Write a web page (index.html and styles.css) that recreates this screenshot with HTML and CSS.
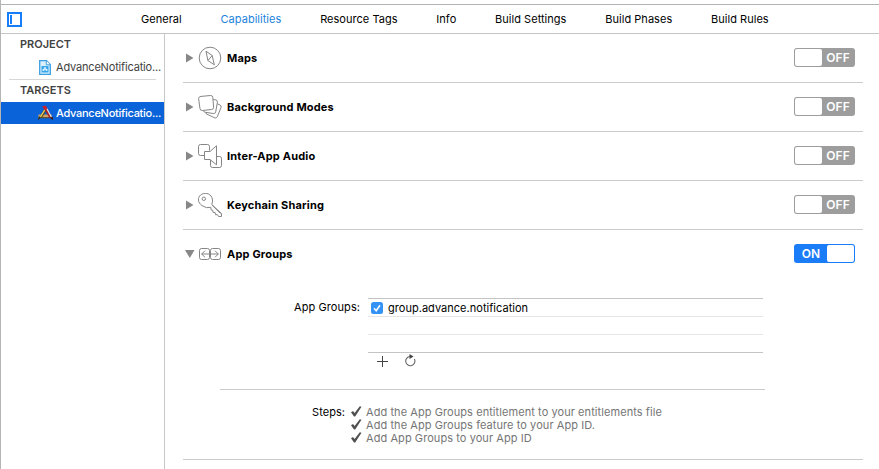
FILE: index.html
```html
<!DOCTYPE html>
<html lang="en">
<head>
<meta charset="utf-8">
<title>Capabilities</title>
<link rel="stylesheet" href="styles.css">
</head>
<body>
<div class="window">
  <nav class="tabs">
    <svg class="pane-toggle" width="15" height="15" viewBox="0 0 15 15"><path d="M1 1h13v13H1z" fill="none" stroke="#177efb" stroke-width="2"/><path d="M3 3h2v9H3z" fill="#177efb"/></svg>
    <div class="tab-list">
      <span class="tab">General</span>
      <span class="tab active">Capabilities</span>
      <span class="tab">Resource Tags</span>
      <span class="tab">Info</span>
      <span class="tab">Build Settings</span>
      <span class="tab">Build Phases</span>
      <span class="tab">Build Rules</span>
    </div>
  </nav>
  <div class="body">
    <aside class="sidebar">
      <h2 class="heading">PROJECT</h2>
      <div class="item project">
        <svg width="12" height="15" viewBox="0 0 12 15"><path d="M.7.7h6.800l3.800 3.800v9.800H.7z" fill="#d9f0fc" stroke="#3d9fe0" stroke-width="1.300"/><path d="M7.300.8v4h4" fill="#fff" stroke="#3d9fe0"/><path d="M2.500 6h7v6.500h-7z" fill="#35a7ed"/><path d="M4 11l2-3.800L8 11M3.500 9.800h5" fill="none" stroke="#fff" stroke-width=".9"/></svg>
        <span class="name">AdvanceNotificatio...</span>
      </div>
      <div class="divider"></div>
      <h2 class="heading">TARGETS</h2>
      <div class="item selected">
        <svg width="17" height="17" viewBox="0 0 17 17"><path d="M1.500 9.500h13v3h-13z" fill="#d0a064"/><path d="M1.500 12.700h13" stroke="#6b4c20"/><path d="M8.800 4 3.500 12.500" stroke="#54461e" stroke-width="2.600"/><path d="M8.600 3.500 3.300 12.200" stroke="#edd05c" stroke-width="1.400"/><path d="M3.800 12.500.5 15.500l1.800-4z" fill="#3a2815"/><path d="m8 3 5.500 9.500" stroke="#a81d28" stroke-width="2.400"/><path d="m9.800 3.500 4.500 8.500" stroke="#f0e6dc" stroke-width="1.200"/><path d="M5 1.500 8.500.5l2 3L8 5z" fill="#c9212e"/><path d="m12.500 12.500 3.500 2.800V12z" fill="#3b2020"/></svg>
        <span class="name">AdvanceNotificatio...</span>
      </div>
    </aside>
    <main class="content">
      <section class="row">
        <svg class="arrow" width="8" height="10"><path d="M0 .5 7.500 5 0 9.500z"/></svg>
        <svg class="icon" width="24" height="24" viewBox="0 0 24 24"><circle cx="12" cy="12" r="10.800"/><path d="m8 5.200 6.200 4.300 2.100 9.300-6.400-4.300zM9.900 14.500l4.300-5"/></svg>
        <span class="title">Maps</span><span class="switch"><i class="knob"></i><b class="state">OFF</b></span>
      </section>
      <section class="row">
        <svg class="arrow" width="8" height="10"><path d="M0 .5 7.500 5 0 9.500z"/></svg>
        <svg class="icon" width="24" height="24" viewBox="0 0 24 24"><path d="M3 1.400 12.600.5q2 0 2.200 1.800l.8 10q0 2-2 2.200l-9.400 1Q2.200 15.500 2 13.700L.6 3.500Q.6 1.700 3 1.400z"/><path d="M15.300 4.500l2.500.4q1.800.4 1.600 2.300l-1.700 9.700q-.5 2-2.400 1.600L7.300 17.300q-1.800-.4-2-1.900"/><path d="m19.300 8.800 2.800 1.200q1.500.7.9 2.500l-3.700 9.300q-.8 1.700-2.500 1.100l-7.800-3.700q-1.300-.6-1.400-1.700"/></svg>
        <span class="title">Background Modes</span><span class="switch"><i class="knob"></i><b class="state">OFF</b></span>
      </section>
      <section class="row">
        <svg class="arrow" width="8" height="10"><path d="M0 .5 7.500 5 0 9.500z"/></svg>
        <svg class="icon" width="24" height="24" viewBox="0 0 24 24"><path d="M6.500 11.500h-4q-2 0-2-2v-7q0-2 2-2h7q2 0 2 2v4M6.500 7.500h5.500l6.500-5.700v19L12 15.500H6.500zM18.500 12.500h3q2 0 2 2v7q0 2-2 2h-7q-2 0-2-2V15.800"/></svg>
        <span class="title">Inter-App Audio</span><span class="switch"><i class="knob"></i><b class="state">OFF</b></span>
      </section>
      <section class="row">
        <svg class="arrow" width="8" height="10"><path d="M0 .5 7.500 5 0 9.500z"/></svg>
        <svg class="icon" width="24" height="24" viewBox="0 0 24 24"><circle cx="5.800" cy="5.800" r="1.700"/><path d="M12.800 14.300Q8.500 15.800 4 12.600C-.5 9.500-.5 4.500 2.600 2 6-.8 12-.2 14 4.700q1.300 3.300-.2 6.800l9.700 9v3h-2.900l-1.200-1.900-1.800.2-.5-2.200-2-.2-.4-2.100-1.700-.5zM14 12.200l8.500 8.300"/></svg>
        <span class="title">Keychain Sharing</span><span class="switch"><i class="knob"></i><b class="state">OFF</b></span>
      </section>
      <section class="row open">
        <svg class="arrow down" width="10" height="8"><path d="M0 0h9.500L4.750 8z"/></svg>
        <svg class="icon" width="24" height="24" viewBox="0 0 24 24"><rect x="1.500" y="6.500" width="10" height="11" rx="2"/><rect x="12.500" y="6.500" width="10" height="11" rx="2"/><path d="M3.500 12h17M7 8.700 3.700 12 7 15.300M17 8.700l3.300 3.300-3.300 3.300"/></svg>
        <span class="title">App Groups</span><span class="switch on"><b class="state">ON</b><i class="knob"></i></span>
      </section>
      <section class="details">
        <div class="groups-form">
          <span class="label">App Groups:</span>
          <div class="table">
            <div class="cell"><svg class="checkbox" width="12" height="12" viewBox="0 0 12 12"><rect width="12" height="12" rx="2.500" fill="#3491f5"/><path d="m3 6.300 2.200 2.400L9 3.200" fill="none" stroke="#fff" stroke-width="1.500"/></svg><span class="group-name">group.advance.notification</span></div>
            <div class="cell"></div>
            <div class="cell last"></div>
            <div class="tools">
              <svg width="11" height="11" viewBox="0 0 11 11"><path d="M5.500 0v11M0 5.500h11" stroke="#444"/></svg>
              <svg class="refresh" width="11" height="13" viewBox="0 0 11 13"><path d="M5 2.500A4.600 4.600 0 1 0 9.400 5" fill="none" stroke="#666" stroke-width="1.100"/><path d="m4.500 0 4 2.400-4 2.500z" fill="#444"/></svg>
            </div>
          </div>
        </div>
        <div class="steps">
          <span class="steps-label">Steps:</span>
          <div class="step-list">
            <div class="step"><svg width="11" height="11" viewBox="0 0 11 11"><path d="M0 6.200 2 5l1.600 2L8.800.2l1.700.6L4.200 10.500H3z" fill="#505050"/></svg><span>Add the App Groups entitlement to your entitlements file</span></div>
            <div class="step"><svg width="11" height="11" viewBox="0 0 11 11"><path d="M0 6.200 2 5l1.600 2L8.800.2l1.700.6L4.200 10.500H3z" fill="#505050"/></svg><span>Add the App Groups feature to your App ID.</span></div>
            <div class="step"><svg width="11" height="11" viewBox="0 0 11 11"><path d="M0 6.200 2 5l1.600 2L8.800.2l1.700.6L4.200 10.500H3z" fill="#505050"/></svg><span>Add App Groups to your App ID</span></div>
          </div>
        </div>
      </section>
    </main>
  </div>
</div>
</body>
</html>
```
FILE: styles.css
```css
* { box-sizing: border-box; }
body { margin: 0; overflow: hidden; background: #fff; color: #000; font: 11px/13px Inter, "Liberation Sans", sans-serif; letter-spacing: .07px; }
svg { display: block; flex: none; }
span { white-space: nowrap; }
.window { height: 469px; padding-top: 4px; border-left: 1px solid #b5b5b5; display: flex; flex-direction: column; }
.tabs { height: 30px; flex: none; display: flex; align-items: center; border-top: 1px solid #b4b4b4; border-bottom: 1px solid #c5c5c5; padding-left: 6px; letter-spacing: .03px; }
.tab-list { display: flex; margin-left: 119px; gap: 38.800px; }
.tab.active { color: #1c83dc; }
.body { flex: 1; display: flex; min-height: 0; }
.sidebar { width: 164px; flex: none; border-right: 1px solid #c8c8c8; color: #424242; }
.heading { font-size: 11px; line-height: 13px; font-weight: 600; margin: 4px 0 0 19px; letter-spacing: 0; }
.item { height: 22px; display: flex; align-items: center; letter-spacing: -.18px; }
.item.project { margin-top: 5px; padding-left: 38px; gap: 5px; }
.item.selected { margin-top: 5px; padding-left: 36px; gap: 2px; color: #fff; background: #0a63d8; font-weight: 500; letter-spacing: -.27px; }
.divider { height: 1px; margin: 1px 8px 0; background: #d7d7d7; }
.content { width: 680px; margin-left: 18px; flex: none; }
.row { height: 49px; display: flex; align-items: center; border-bottom: 1px solid #cbcbcb; padding-right: 8px; }
.row.open { height: 48px; border-bottom: 0; }
.arrow { fill: #878787; margin-left: 3px; }
.arrow.down { margin-left: 2px; margin-right: -1px; }
.icon { margin-left: 4px; fill: none; stroke: #858585; stroke-width: 1; }
.title { margin-left: 5px; font-weight: 700; letter-spacing: .18px; }
.switch { margin: 0 0 2px auto; width: 61px; height: 19px; display: flex; padding: 1px; border-radius: 3px; background: #9d9d9d; color: #fff; }
.knob { width: 27px; background: #fff; border-radius: 2px; }
.state { flex: 1; text-align: center; font-size: 12px; line-height: 17px; font-weight: 600; }
.switch.on { background: #1b7cf8; }
.details { height: 182px; padding-top: 20px; border-bottom: 1px solid #cbcbcb; }
.groups-form { width: 545px; height: 92px; margin-left: 37px; border-bottom: 1px solid #cbcbcb; display: flex; }
.label { width: 140px; text-align: right; padding-top: 3px; }
.table { width: 395px; margin-left: 8px; border-top: 1px solid #c4c4c4; }
.cell { height: 18px; border-bottom: 1px solid #e5e5e5; display: flex; align-items: center; padding-left: 3px; gap: 5px; }
.group-name { padding-top: 1px; letter-spacing: .03px; }
.cell.last { border-color: #c4c4c4; }
.tools { display: flex; align-items: center; gap: 17px; padding: 3px 0 0 9px; }
.refresh { margin-top: -2px; }
.steps { display: flex; padding: 16px 0 0 129px; }
.steps-label { width: 34px; }
.step-list { margin-left: 5px; color: #757575; }
.step { height: 13px; display: flex; align-items: center; gap: 4px; }
.step svg { margin-top: -2px; }
```
